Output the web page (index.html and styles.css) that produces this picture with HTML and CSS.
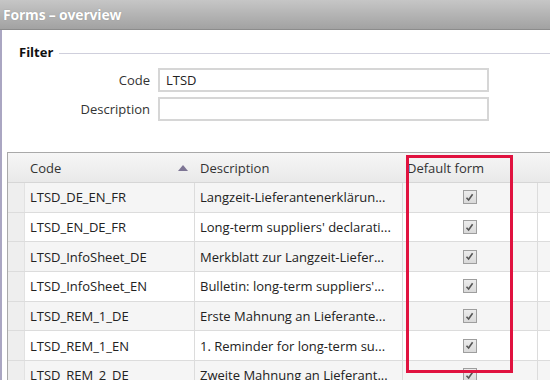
FILE: index.html
```
<!DOCTYPE html>
<html lang="en">
<head>
    <meta charset="UTF-8">
    <title>Forms – overview</title>
    <link rel="stylesheet" href="styles.css">
</head>
<body>
    <div class="window">
        <header class="titlebar">Forms – overview</header>

        <div class="content">
            <section class="filter">
                <div class="filter-head">
                    <span class="filter-title">Filter</span>
                    <span class="filter-rule"></span>
                </div>
                <div class="filter-form">
                    <label for="code">Code</label>
                    <input id="code" type="text" value="LTSD">
                    <label for="desc">Description</label>
                    <input id="desc" type="text" value="">
                </div>
            </section>

            <div class="grid">
                <div class="row head">
                    <div class="cell sel"></div>
                    <div class="cell code">Code <span class="sort"></span></div>
                    <div class="cell desc">Description</div>
                    <div class="cell dflt">Default form</div>
                    <div class="cell rest"></div>
                </div>
                <div id="gridBody"></div>
            </div>

            <div class="highlight"></div>
        </div>
    </div>

    <script>
        const forms = [
            ['LTSD_DE_EN_FR', 'Langzeit-Lieferantenerklärun...'],
            ['LTSD_EN_DE_FR', 'Long-term suppliers\' declarati...'],
            ['LTSD_InfoSheet_DE', 'Merkblatt zur Langzeit-Liefer...'],
            ['LTSD_InfoSheet_EN', 'Bulletin: long-term suppliers\'...'],
            ['LTSD_REM_1_DE', 'Erste Mahnung an Lieferante...'],
            ['LTSD_REM_1_EN', '1. Reminder for long-term su...'],
            ['LTSD_REM_2_DE', 'Zweite Mahnung an Lieferant...']
        ];

        const check = '<svg width="9" height="9" viewBox="0 0 9 9"><path d="M1.5 4.8 L3.6 7 L7.6 1.2" fill="none" stroke="#555" stroke-width="1.6"/></svg>';

        const body = document.getElementById('gridBody');
        forms.forEach((f, i) => {
            const row = document.createElement('div');
            row.className = 'row' + (i % 2 === 0 ? ' alt' : '');
            row.innerHTML = `
                <div class="cell sel"></div>
                <div class="cell code">${f[0]}</div>
                <div class="cell desc">${f[1]}</div>
                <div class="cell dflt"><span class="check">${check}</span></div>
                <div class="cell rest"></div>
            `;
            body.appendChild(row);
        });
    </script>
</body>
</html>
```

FILE: styles.css
```
* {
    margin: 0;
    padding: 0;
    box-sizing: border-box;
}

body {
    background: #fff;
    font-family: 'Open Sans', 'Noto Sans', sans-serif;
    font-size: 13px;
    color: #222;
    overflow: hidden;
}

.window {
    width: 550px;
    height: 380px;
    overflow: hidden;
}

/* Title bar */
.titlebar {
    height: 30px;
    padding: 5px 3px 0;
    background: linear-gradient(to bottom, #c6c6c6, #a2a2a2);
    border-bottom: 1px solid #8c8c8c;
    color: #fff;
    font-weight: bold;
    font-size: 14px;
    letter-spacing: -0.2px;
    text-shadow: 0 0 1px #888;
}

.content {
    position: relative;
    border-left: 2px solid #aaa6c2;
    height: 350px;
}

/* Filter */
.filter {
    padding: 14px 0 0 17px;
}

.filter-head {
    display: flex;
    align-items: center;
    gap: 6px;
    height: 16px;
}

.filter-title {
    font-weight: bold;
    color: #111;
}

.filter-rule {
    flex: 1;
    height: 1px;
    background: #cfcfdc;
    margin-top: 2px;
}

.filter-form {
    display: grid;
    grid-template-columns: 131px 331px;
    column-gap: 8px;
    row-gap: 5px;
    margin-top: 8px;
    align-items: center;
}

.filter-form label {
    text-align: right;
    color: #333;
}

.filter-form input {
    height: 24px;
    border: 2px solid #d6d6d6;
    font: inherit;
    color: #222;
    padding: 0 6px;
    outline: none;
}

/* Grid */
.grid {
    margin: 31px 0 0 5px;
    border-top: 1px solid #a9a9a9;
    border-left: 1px solid #a9a9a9;
}

.row {
    display: grid;
    grid-template-columns: 17px 170px 208px 135px 40px;
    height: 29.7px;
    border-bottom: 1px solid #dcdcdc;
    background: #fff;
}

.row.alt {
    background: #f5f5f5;
}

.cell {
    display: flex;
    align-items: center;
    padding: 0 5px;
    white-space: nowrap;
    overflow: hidden;
    border-right: 1px solid #dcdcdc;
}

.cell.sel {
    background: #eeeeee;
    border-right-color: #e2e2e2;
}

.cell.code {
    justify-content: space-between;
}

.cell.dflt {
    justify-content: center;
    padding-left: 4px;
}

.row.head {
    height: 30px;
    background: linear-gradient(to bottom, #f6f6f6, #e9e9e9);
    border-bottom: 1px solid #d6d6d6;
    color: #333;
}

.row.head .cell {
    border-right: 1px solid transparent;
    position: relative;
}

.row.head .cell::after {
    content: '';
    position: absolute;
    right: -1px;
    top: 4px;
    bottom: 3px;
    width: 1px;
    background: #c4c4c4;
}

.row.head .cell.sel {
    background: transparent;
}

.row.head .cell.dflt {
    justify-content: flex-start;
    padding-left: 4px;
}

.sort {
    width: 0;
    height: 0;
    border-left: 5px solid transparent;
    border-right: 5px solid transparent;
    border-bottom: 6px solid #7d7594;
    margin-right: 1px;
}

.check {
    width: 14px;
    height: 14px;
    border: 1px solid #9e9e9e;
    background: linear-gradient(to bottom, #ececec, #d9d9d9);
    display: flex;
    align-items: center;
    justify-content: center;
}

/* Annotation */
.highlight {
    position: absolute;
    left: 404px;
    top: 125px;
    width: 107px;
    height: 218px;
    border: 3px solid #e0123f;
}
```
